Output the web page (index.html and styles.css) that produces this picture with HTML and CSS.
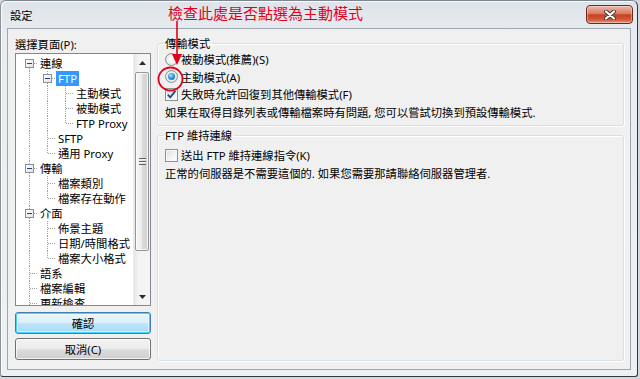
FILE: index.html
```html
<!DOCTYPE html>
<html lang="zh-Hant">
<head>
    <meta charset="UTF-8">
    <meta name="viewport" content="width=device-width, initial-scale=1.0">
    <title>設定</title>
    <link rel="stylesheet" href="styles.css">
</head>
<body>
<div class="window">
    <div class="titlebar">
        <span class="title">設定</span>
        <button class="closeBtn" title="關閉">
            <svg width="12" height="10" viewBox="0 0 12 10">
                <path d="M2 1.5 L10 8.5 M10 1.5 L2 8.5" stroke="#3b3b3b" stroke-width="4" stroke-linecap="round"/>
                <path d="M2 1.5 L10 8.5 M10 1.5 L2 8.5" stroke="#fff" stroke-width="2.2" stroke-linecap="round"/>
            </svg>
        </button>
    </div>

    <div class="client">
        <div class="side">
            <div class="sideLabel">選擇頁面(P):</div>
            <div class="tree">
                <ul class="treeItems">
                    <li><span class="g first"><i class="box"></i></span><span class="txt">連線</span></li>
                    <li><span class="g pipe"></span><span class="g tee"><i class="box"></i></span><span class="txt selected">FTP</span></li>
                    <li><span class="g pipe"></span><span class="g pipe"></span><span class="g tee"></span><span class="txt">主動模式</span></li>
                    <li><span class="g pipe"></span><span class="g pipe"></span><span class="g tee"></span><span class="txt">被動模式</span></li>
                    <li><span class="g pipe"></span><span class="g pipe"></span><span class="g end"></span><span class="txt">FTP Proxy</span></li>
                    <li><span class="g pipe"></span><span class="g tee"></span><span class="txt">SFTP</span></li>
                    <li><span class="g pipe"></span><span class="g end"></span><span class="txt">通用 Proxy</span></li>
                    <li><span class="g tee"><i class="box"></i></span><span class="txt">傳輸</span></li>
                    <li><span class="g pipe"></span><span class="g tee"></span><span class="txt">檔案類別</span></li>
                    <li><span class="g pipe"></span><span class="g end"></span><span class="txt">檔案存在動作</span></li>
                    <li><span class="g tee"><i class="box"></i></span><span class="txt">介面</span></li>
                    <li><span class="g pipe"></span><span class="g tee"></span><span class="txt">佈景主題</span></li>
                    <li><span class="g pipe"></span><span class="g tee"></span><span class="txt">日期/時間格式</span></li>
                    <li><span class="g pipe"></span><span class="g end"></span><span class="txt">檔案大小格式</span></li>
                    <li><span class="g tee"></span><span class="txt">語系</span></li>
                    <li><span class="g tee"></span><span class="txt">檔案編輯</span></li>
                    <li><span class="g tee"></span><span class="txt">更新檢查</span></li>
                </ul>
                <div class="scrollbar">
                    <div class="sbBtn">
                        <svg width="7" height="4" viewBox="0 0 7 4"><path d="M0 4 L3.5 0 L7 4 Z" fill="#2b2b2b"/></svg>
                    </div>
                    <div class="sbTrack">
                        <div class="sbThumb"><span class="grip"></span></div>
                    </div>
                    <div class="sbBtn">
                        <svg width="7" height="4" viewBox="0 0 7 4"><path d="M0 0 L7 0 L3.5 4 Z" fill="#2b2b2b"/></svg>
                    </div>
                </div>
            </div>
            <button class="btn btnDefault">確認</button>
            <button class="btn">取消(C)</button>
        </div>

        <div class="pages">
            <fieldset class="group modeGroup">
                <legend>傳輸模式</legend>
                <div class="opt"><span class="radio"></span>被動模式(推薦)(S)</div>
                <div class="opt"><span class="radio on"></span>主動模式(A)</div>
                <div class="opt">
                    <span class="check">
                        <svg width="11" height="11" viewBox="0 0 11 11"><path d="M1.8 5.6 L4.3 8.3 L9.4 1.8" fill="none" stroke="#24489c" stroke-width="1.9"/></svg>
                    </span>失敗時允許回復到其他傳輸模式(F)
                </div>
                <div class="opt">如果在取得目錄列表或傳輸檔案時有問題, 您可以嘗試切換到預設傳輸模式.</div>
            </fieldset>

            <fieldset class="group keepGroup">
                <legend>FTP 維持連線</legend>
                <div class="opt"><span class="check"></span>送出 FTP 維持連線指令(K)</div>
                <div class="opt">正常的伺服器是不需要這個的. 如果您需要那請聯絡伺服器管理者.</div>
            </fieldset>
        </div>
    </div>

    <!-- red annotation drawn over the dialog -->
    <div class="note">檢查此處是否點選為主動模式</div>
    <svg class="noteMarks" width="50" height="100" viewBox="0 0 50 100">
        <path d="M27 21 L27 57" stroke="#e3001b" stroke-width="1.6"/>
        <path d="M22 54 L32 54 L27 65 Z" fill="#e3001b"/>
        <ellipse cx="20.5" cy="79" rx="12" ry="11.5" fill="none" stroke="#e3001b" stroke-width="1.8"/>
    </svg>
</div>
</body>
</html>
```

FILE: styles.css
```css
* {
    box-sizing: border-box;
}
html, body {
    margin: 0;
}
body {
    width: 640px;
    height: 379px;
    overflow: hidden;
    background: #d3d8de;
    font-family: "Noto Sans", "Noto Sans CJK TC", sans-serif;
    font-size: 11.3px;
    color: #000;
}

.window {
    position: relative;
    width: 638px;
    height: 377px;
    display: flex;
    flex-direction: column;
    padding: 0 6px 6px;
    border: 1px solid;
    border-color: #7d858e #34383d #34383d #8a9199;
    border-radius: 6px 6px 3px 3px;
    background: linear-gradient(to bottom, #dde3e9 0, #e8ecf0 30px, #eef1f4 100%);
    box-shadow: inset 1px 1px 0 rgba(255, 255, 255, 0.85);
}

.titlebar {
    height: 27px;
    margin: 0 -6px;
    padding: 0 4px 0 9px;
    display: flex;
    align-items: center;
}
.title {
    flex: 1;
}
.closeBtn {
    align-self: flex-start;
    margin-top: 4px;
    width: 47px;
    height: 19px;
    padding: 0;
    border: 1px solid #6b2a20;
    border-radius: 4px;
    background: linear-gradient(to bottom, #edb9ab 0%, #dc7a62 45%, #c4421f 52%, #d4583a 80%, #e8967a 100%);
    box-shadow: inset 0 0 0 1px rgba(255, 255, 255, 0.35);
    display: flex;
    align-items: center;
    justify-content: center;
}

.client {
    flex: 1;
    display: flex;
    gap: 6px;
    padding: 0 6px 0 7px;
    background: #f0f0f0;
    border: 1px solid #9ea6ae;
}

/* left column */
.side {
    width: 136px;
    display: flex;
    flex-direction: column;
    padding-top: 8px;
}
.sideLabel {
    line-height: 16px;
    height: 16px;
}
.tree {
    height: 253px;
    display: flex;
    background: #fff;
    border: 1px solid #828790;
}
.treeItems {
    flex: 1;
    list-style: none;
    margin: 0;
    padding: 2px 0 0 4px;
    overflow: hidden;
}
.treeItems li {
    display: flex;
    height: 15px;
    line-height: 15px;
    white-space: nowrap;
}
.txt {
    padding: 0 2px;
}
.txt.selected {
    background: #3399ff;
    color: #fff;
}

/* dotted tree guides */
.g {
    position: relative;
    flex: none;
    width: 18px;
    height: 15px;
}
.g::before,
.g::after {
    content: "";
    position: absolute;
}
.g::before {
    left: 9px;
    width: 1px;
    background-image: linear-gradient(to bottom, #a0a0a0 50%, transparent 50%);
    background-size: 1px 2px;
}
.pipe::before,
.tee::before {
    top: 0;
    bottom: 0;
}
.end::before {
    top: 0;
    height: 8px;
}
.first::before {
    top: 8px;
    bottom: 0;
}
.pipe::after {
    display: none;
}
.tee::after,
.end::after,
.first::after {
    left: 10px;
    top: 7px;
    width: 8px;
    height: 1px;
    background-image: linear-gradient(to right, #a0a0a0 50%, transparent 50%);
    background-size: 2px 1px;
}
.box {
    position: absolute;
    z-index: 1;
    left: 5px;
    top: 3px;
    width: 9px;
    height: 9px;
    border: 1px solid #8e8f8f;
    background: linear-gradient(135deg, #fff 0%, #e2e2e2 100%);
}
.box::after {
    content: "";
    position: absolute;
    left: 1px;
    top: 3px;
    width: 5px;
    height: 1px;
    background: #1f3f86;
}

/* scrollbar */
.scrollbar {
    width: 17px;
    display: flex;
    flex-direction: column;
    background: linear-gradient(to right, #e5e5e5 0, #f4f4f4 30%, #f4f4f4 100%);
    border-left: 1px solid #ececec;
}
.sbBtn {
    height: 17px;
    display: flex;
    align-items: center;
    justify-content: center;
}
.sbTrack {
    flex: 1;
    padding: 1px 1px 36px 1px;
}
.sbThumb {
    height: 179px;
    border: 1px solid #979797;
    border-radius: 2px;
    background: linear-gradient(to right, #f6f6f6 0%, #ebebeb 50%, #dbdbdb 51%, #d2d2d2 100%);
    box-shadow: inset 0 0 0 1px rgba(255, 255, 255, 0.7);
    display: flex;
    align-items: center;
    justify-content: center;
}
.grip {
    width: 7px;
    height: 7px;
    background: repeating-linear-gradient(to bottom, #606060 0 1px, #f4f4f4 1px 2px, transparent 2px 3px);
}

/* dialog buttons */
.btn {
    height: 22px;
    margin-top: 4px;
    padding: 0;
    font-family: inherit;
    font-size: inherit;
    color: #000;
    border: 1px solid #707070;
    border-radius: 3px;
    background: linear-gradient(to bottom, #f2f2f2 0%, #ebebeb 50%, #dddddd 51%, #cfcfcf 100%);
    box-shadow: inset 0 0 0 1px rgba(255, 255, 255, 0.75);
}
.btnDefault {
    margin-top: 6px;
    border-color: #3c7fb1;
    background: linear-gradient(to bottom, #e9f6fd 0%, #d9f0fc 50%, #bee6fd 51%, #a7d9f5 100%);
    box-shadow: inset 0 0 0 1px #48d5fd, inset 0 0 0 2px rgba(255, 255, 255, 0.5);
}

/* right side pages */
.pages {
    width: 467px;
    display: flex;
    flex-direction: column;
    padding: 6.5px 0 8px;
}
.group {
    margin: 0;
    min-width: 0;
    padding: 0 6px 0 7px;
    border: 1px solid #d5dfe5;
    border-radius: 3px;
    box-shadow: inset 1px 1px 0 #fff, 1px 1px 0 #fff;
}
.group legend {
    margin-left: -2px;
    padding: 0 2px;
    line-height: 15px;
}
.modeGroup {
    padding-bottom: 4.5px;
}
.modeGroup .opt {
    height: 17.5px;
}
.keepGroup {
    flex: 1;
    margin-top: 1.5px;
    padding-top: 3.5px;
}
.keepGroup .opt {
    height: 18px;
}
.opt {
    display: flex;
    align-items: center;
    white-space: nowrap;
}

.radio,
.check {
    flex: none;
    width: 13px;
    height: 13px;
    margin-right: 3px;
    border: 1px solid #8e8f8f;
}
.radio {
    position: relative;
    border-radius: 50%;
    background: radial-gradient(circle at 50% 50%, #fff 0, #f0f0f0 45%, #d4d4d4 100%);
}
.radio.on::after {
    content: "";
    position: absolute;
    left: 2px;
    top: 2px;
    width: 7px;
    height: 7px;
    border-radius: 50%;
    background: radial-gradient(circle at 40% 35%, #b4ecff 0, #35a4e4 40%, #13589c 100%);
}
.check {
    display: flex;
    align-items: center;
    justify-content: center;
    background: linear-gradient(135deg, #dcdcdc 0%, #f4f4f4 60%, #fff 100%);
    box-shadow: inset 0 0 0 1px #f7f7f7;
}

/* red annotation */
.note {
    position: absolute;
    left: 167px;
    top: 3px;
    color: #e3001b;
    font-family: "Noto Sans CJK TC", sans-serif;
    font-size: 15px;
    line-height: 18px;
}
.noteMarks {
    position: absolute;
    left: 149px;
    top: -1px;
}
```
